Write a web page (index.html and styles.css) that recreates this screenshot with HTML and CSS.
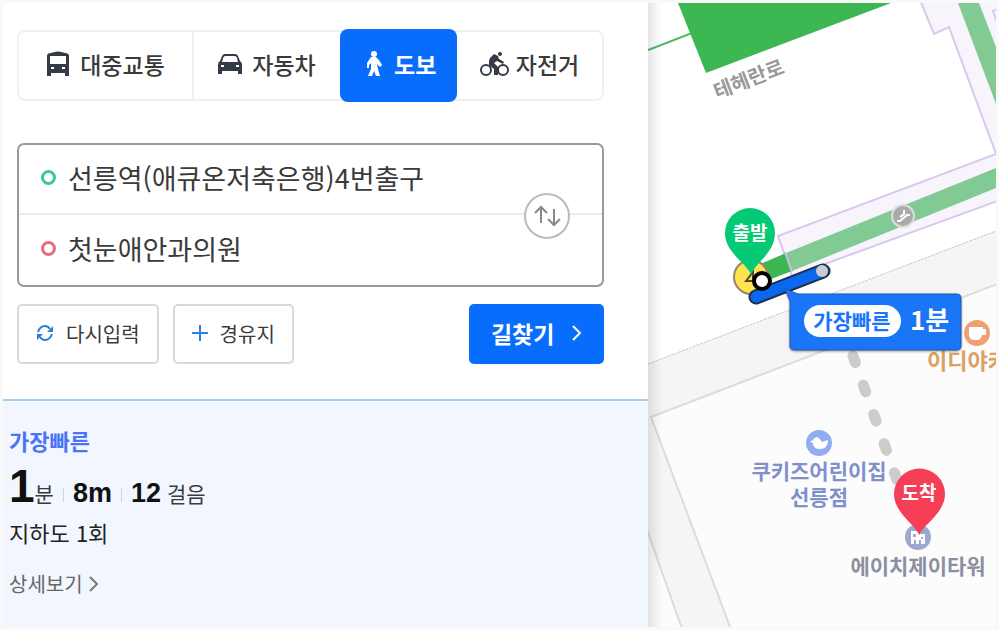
FILE: index.html
```
<!DOCTYPE html>
<html lang="ko">
<head>
  <meta charset="utf-8">
  <title>길찾기</title>
  <link rel="stylesheet" href="styles.css">
</head>
<body>
  <main class="panel">
    <div class="search">
      <nav class="tabs">
        <button type="button" class="tab">
          <svg width="24" height="26" viewBox="0 0 24 26">
            <path fill="#343a46" fill-rule="evenodd" d="M5 2Q12-1 19 2Q23 2 23 5V25H19V22H5V25H1V5Q1 2 5 2ZM4 5V13H20V5ZM5 16V18H8V16ZM16 16V18H19V16Z"/>
          </svg>
          대중교통
        </button>
        <button type="button" class="tab">
          <svg width="24" height="26" viewBox="0 0 24 26">
            <path fill="#343a46" fill-rule="evenodd" d="M7 3H17Q19 3 20 5L22 10Q24 11 24 14V23H20V20H4V23H0V14Q0 11 2 10L4 5Q5 3 7 3ZM7 5Q6 5 5 7L4 11H20L19 7Q18 5 17 5ZM3 14V16H6V14ZM18 14V16H21V14Z"/>
          </svg>
          자동차
        </button>
        <button type="button" class="tab active">
          <svg width="24" height="26" viewBox="0 0 24 26">
            <circle cx="14" cy="3" r="3" fill="#fff"/>
            <path fill="#fff" d="M11 6H16L19 9L22 14L20 16L17 13L18 18L20 25H16L14 20L12 25H8L11 18V12L9 14V17H7V12Z"/>
          </svg>
          도보
        </button>
        <button type="button" class="tab bike">
          <svg width="30" height="26" viewBox="0 0 30 26">
            <g fill="none" stroke="#343a46" stroke-width="2">
              <circle cx="6" cy="19" r="5"/>
              <circle cx="23" cy="19" r="5"/>
            </g>
            <circle cx="20" cy="3" r="2" fill="#343a46"/>
            <path fill="#343a46" d="M9 10L10 7L14 3L18 5L19 8L24 11L23 13L17 10L14 12L18 16V24H14V18L9 14Z"/>
          </svg>
          자전거
        </button>
      </nav>

      <form class="route-form" id="route">
        <div class="fields">
          <div class="field">
            <span class="dot start"></span>
            <input type="text" aria-label="출발지" value="선릉역(애큐온저축은행)4번출구">
          </div>
          <div class="field">
            <span class="dot goal"></span>
            <input type="text" aria-label="도착지" value="첫눈애안과의원">
          </div>
          <button type="button" class="swap" aria-label="출발지 도착지 바꾸기">
            <svg width="30" height="24" viewBox="0 0 30 24" fill="none" stroke="#888" stroke-width="2">
              <path d="M9 19V3M3 9L9 3L15 9M22 5V21M16 15L22 21L28 15"/>
            </svg>
          </button>
        </div>
        <div class="actions">
          <button type="button" class="btn reset">
            <svg width="18" height="18" viewBox="0 0 18 18">
              <path fill="none" stroke="#2a7de1" stroke-width="2" d="M2 8Q4 2 9 2Q12 2 14 5M16 10Q14 16 9 16Q6 16 4 13"/>
              <path fill="#2a7de1" d="M17 2V8H11ZM1 16V10H7Z"/>
            </svg>
            다시입력
          </button>
          <button type="button" class="btn via">
            <svg width="16" height="16" viewBox="0 0 16 16">
              <path fill="none" stroke="#2a7de1" stroke-width="2" d="M8 0V16M0 8H16"/>
            </svg>
            경유지
          </button>
          <button type="submit" class="btn find">
            길찾기
            <svg width="10" height="16" viewBox="0 0 10 16">
              <path fill="none" stroke="#fff" stroke-width="2" d="M1 1L8 8L1 15"/>
            </svg>
          </button>
        </div>
      </form>
    </div>

    <section class="result">
      <h2>가장빠른</h2>
      <p class="summary">
        <strong class="time">1</strong><span class="unit">분</span>
        <span class="bar"></span>
        <strong>8m</strong>
        <span class="bar"></span>
        <strong>12</strong><span class="steps">걸음</span>
      </p>
      <p class="via-info">지하도 1회</p>
      <a href="#detail" class="detail">상세보기
        <svg width="10" height="16" viewBox="0 0 10 16">
          <path fill="none" stroke="#777" stroke-width="2" d="M1 1L8 8L1 15"/>
        </svg>
      </a>
    </section>
  </main>

  <aside class="map">
    <svg viewBox="648 3 348 624" preserveAspectRatio="xMinYMin slice">
      <rect x="648" y="3" width="348" height="624" fill="#fff"/>

      <!-- roads and blocks -->
      <path fill="#f5f5f5" d="M648 364L996 231V627H648Z"/>
      <path fill="none" stroke="#c9c9bf" stroke-dasharray="3 1" d="M648 364L996 231"/>
      <path fill="#fcfcfc" stroke="#dcdcdc" stroke-width="2" d="M651 417L1000 283V640H735Z"/>
      <path fill="#fcfcfc" stroke="#dcdcdc" stroke-width="2" d="M640 510L686 640H640Z"/>

      <!-- subway -->
      <path fill="none" stroke="#4fb965" stroke-width="2" d="M648 50L692 33"/>
      <path fill="#3db751" d="M678 3H891L706 73Z"/>
      <path fill="#f7f4fb" stroke="#dac6f0" stroke-width="2" d="M920 0L934 34L949 27L996 154L778 236L792 276L1000 200V0Z"/>
      <path fill="#fff" stroke="#dac6f0" stroke-width="2" d="M1000 8L993 11L1000 30Z"/>
      <path fill="#82ca93" d="M958 3H979L996 47V104ZM786 253L996 168V188L792 271Z"/>
      <path fill="#3db751" d="M760 264L786 253L792 271L766 281Z"/>
      <path stroke="#cdbfe2" stroke-width="2" d="M785 252L792 272"/>

      <g transform="translate(903 216)">
        <circle r="11" fill="#aaa" stroke="#ddd" stroke-width="2"/>
        <path fill="none" stroke="#fff" stroke-width="2" d="M-6 5H-3L4-1H7M-3 1L1-2V-6"/>
      </g>

      <text class="road" transform="translate(717 99) rotate(-21)">테헤란로</text>

      <!-- walking route -->
      <path fill="none" stroke="#ccc" stroke-width="11" stroke-linecap="round" stroke-dasharray="7 24" d="M853 356L903 497"/>
      <circle cx="751" cy="277" r="17" fill="#ffe44f" stroke="#98846e" stroke-width="2"/>
      <path fill="none" stroke="#4d4634" stroke-width="2" d="M746 281L753 272V281Z"/>
      <path stroke="#1e2f4b" stroke-width="15" stroke-linecap="round" d="M756 297L823 271"/>
      <path stroke="#0b67ee" stroke-width="11" stroke-linecap="round" d="M756 297L823 271"/>
      <circle cx="822" cy="271" r="6" fill="#ccc"/>

      <path fill="#04ca76" d="M751 275C747 263 725 253 725 233A25 25 0 0 1 775 233C775 253 755 263 751 275Z"/>
      <text class="pin" x="750" y="240">출발</text>
      <circle cx="762" cy="281" r="8" fill="#fff" stroke="#000" stroke-width="4"/>

      <!-- places -->
      <g transform="translate(977 333)">
        <circle r="13" fill="#f0a070"/>
        <path fill="#fff" d="M-8-6H6V-4H9V2H5Q4 7 0 7H-3Q-8 7-8 1Z"/>
      </g>
      <text class="place cafe" x="927" y="369">이디야카</text>

      <g transform="translate(819 443)">
        <circle r="13" fill="#91adf2"/>
        <path fill="#fff" d="M-9-1L-6-3Q-4-7 0-5L3-1L9-3Q9 6 1 6Q-6 6-6 0Z"/>
      </g>
      <text class="place kids" x="819" y="479">쿠키즈어린이집</text>
      <text class="place kids" x="819" y="505">선릉점</text>

      <g transform="translate(918 537)">
        <circle r="13" fill="#9da8d0"/>
        <path fill="#fff" fill-rule="evenodd" d="M-7-6H1V-3H7V7H3V3H1V7H-2V3H-4V7H-7ZM-5-3V0H-2V-3ZM3 0V2H5V0Z"/>
      </g>
      <text class="place tower" x="918" y="574">에이치제이타워</text>

      <path fill="#f53f57" d="M919 535C915 524 894 513 894 494A25 25 0 0 1 945 494C945 513 924 524 919 535Z"/>
      <text class="pin" x="919" y="500">도착</text>

      <!-- callout -->
      <path class="callout" fill="#1b75f7" stroke="#245ab5" d="M785 289L798 294H957Q961 294 961 298V346Q961 350 957 350H795Q790 350 790 346V301Z"/>
      <rect x="804" y="305" width="97" height="32" rx="16" fill="#fff"/>
      <text class="best" x="852" y="329">가장빠른</text>
      <text class="minute" x="910" y="330">1분</text>
    </svg>
  </aside>
</body>
</html>
```
FILE: styles.css
```
* {
  box-sizing: border-box;
  margin: 0;
  padding: 0;
}
body {
  font-family: "Noto Sans CJK KR", sans-serif;
  background-color: #f9f9f9;
  color: #3a3a3a;
  display: flex;
  height: 100vh;
  min-height: 600px;
  padding: 3px;
}
button, input {
  font-family: inherit;
  color: inherit;
}
button {
  cursor: pointer;
}
svg {
  display: block;
  flex: none;
}

.panel {
  flex: 0 0 65%;
  display: flex;
  flex-direction: column;
  background-color: #fff;
}
.search {
  padding: 27px 44px 35px 14px;
}

.tabs {
  display: grid;
  grid-template-columns: 30% 25% 20% 25%;
  height: 71px;
  border: 2px solid #f0f0f0;
  border-radius: 8px;
}
.tab {
  display: flex;
  align-items: center;
  justify-content: center;
  gap: 10px;
  padding-bottom: 4px;
  border: none;
  background: none;
  font-size: 23px;
  font-weight: 500;
  line-height: 32px;
}
.tab:first-child {
  border-right: 2px solid #f0f0f0;
}
.tab.active {
  margin: -3px 0;
  background-color: #086cfc;
  border-radius: 8px;
  color: #fff;
  font-weight: 700;
}
.tab.bike {
  gap: 6px;
}

.route-form {
  margin-top: 42px;
}
.fields {
  position: relative;
  border: 2px solid #999;
  border-radius: 7px;
}
.field {
  display: flex;
  align-items: center;
  gap: 12px;
  height: 70px;
  padding: 0 0 3px 22px;
}
.field:first-child {
  border-bottom: 2px solid #ececec;
}
.field input {
  flex: 1;
  min-width: 0;
  border: none;
  outline: none;
  background: none;
  font-size: 27px;
  line-height: 40px;
}
.dot {
  width: 15px;
  height: 15px;
  border: 3px solid #3ccb8a;
  border-radius: 50%;
}
.dot.goal {
  border-color: #e96a78;
}
.swap {
  position: absolute;
  right: 32px;
  top: 48px;
  width: 46px;
  height: 46px;
  display: flex;
  align-items: center;
  justify-content: center;
  border: 2px solid #bbb;
  border-radius: 50%;
  background-color: #fff;
}

.actions {
  display: flex;
  gap: 14px;
  margin-top: 17px;
}
.btn {
  display: flex;
  align-items: center;
  gap: 12px;
  height: 60px;
  padding: 0 17px 2px;
  border: 2px solid #d9d9d9;
  border-radius: 5px;
  background-color: #fff;
  font-size: 20px;
}
.btn.find {
  margin-left: auto;
  gap: 18px;
  padding: 0 22px 2px;
  border: none;
  background-color: #086cfc;
  color: #fff;
  font-size: 23px;
  font-weight: 700;
}

.result {
  flex: 1;
  padding: 23px 6px;
  border-top: 2px solid #a9cdea;
  background-color: #f2f7ff;
}
.result h2 {
  color: #4b74f5;
  font-size: 22px;
  line-height: 32px;
}
.summary {
  display: flex;
  align-items: baseline;
  height: 60px;
  line-height: 60px;
  font-size: 21px;
}
.summary strong {
  font-family: "Liberation Sans", sans-serif;
  font-size: 27px;
  color: #111;
}
.summary .time {
  font-size: 46px;
}
.bar {
  width: 1px;
  height: 14px;
  margin: 0 9px;
  background-color: #d0d4da;
}
.steps {
  margin-left: 6px;
}
.via-info {
  color: #222;
  font-size: 22px;
  line-height: 32px;
}
.detail {
  display: flex;
  align-items: center;
  gap: 6px;
  margin-top: 20px;
  color: #666;
  font-size: 20px;
  line-height: 32px;
  text-decoration: none;
}

.map {
  position: relative;
  flex: 1;
  min-width: 0;
  overflow: hidden;
}
.map svg {
  width: 100%;
  height: 100%;
}
/* shadow the panel drops on the map */
.map::before {
  content: "";
  position: absolute;
  left: 0;
  top: 0;
  bottom: 0;
  width: 14px;
  background: linear-gradient(to right, rgba(0, 0, 0, 0.1), rgba(0, 0, 0, 0));
}
.road {
  fill: #999;
  font-size: 20px;
  font-weight: 700;
}
.pin {
  fill: #fff;
  font-size: 19px;
  font-weight: 700;
  text-anchor: middle;
}
.place {
  font-size: 21px;
  font-weight: 700;
  text-anchor: middle;
}
.kids {
  fill: #7f90cb;
}
.tower {
  fill: #8b90a0;
}
.cafe {
  fill: #dba063;
  font-size: 22px;
  text-anchor: start;
}
.callout {
  filter: drop-shadow(0 1px 1px rgba(0, 0, 0, 0.4));
}
.best {
  fill: #1b75f7;
  font-size: 21px;
  font-weight: 700;
  text-anchor: middle;
}
.minute {
  fill: #fff;
  font-size: 26px;
  font-weight: 700;
}
```
